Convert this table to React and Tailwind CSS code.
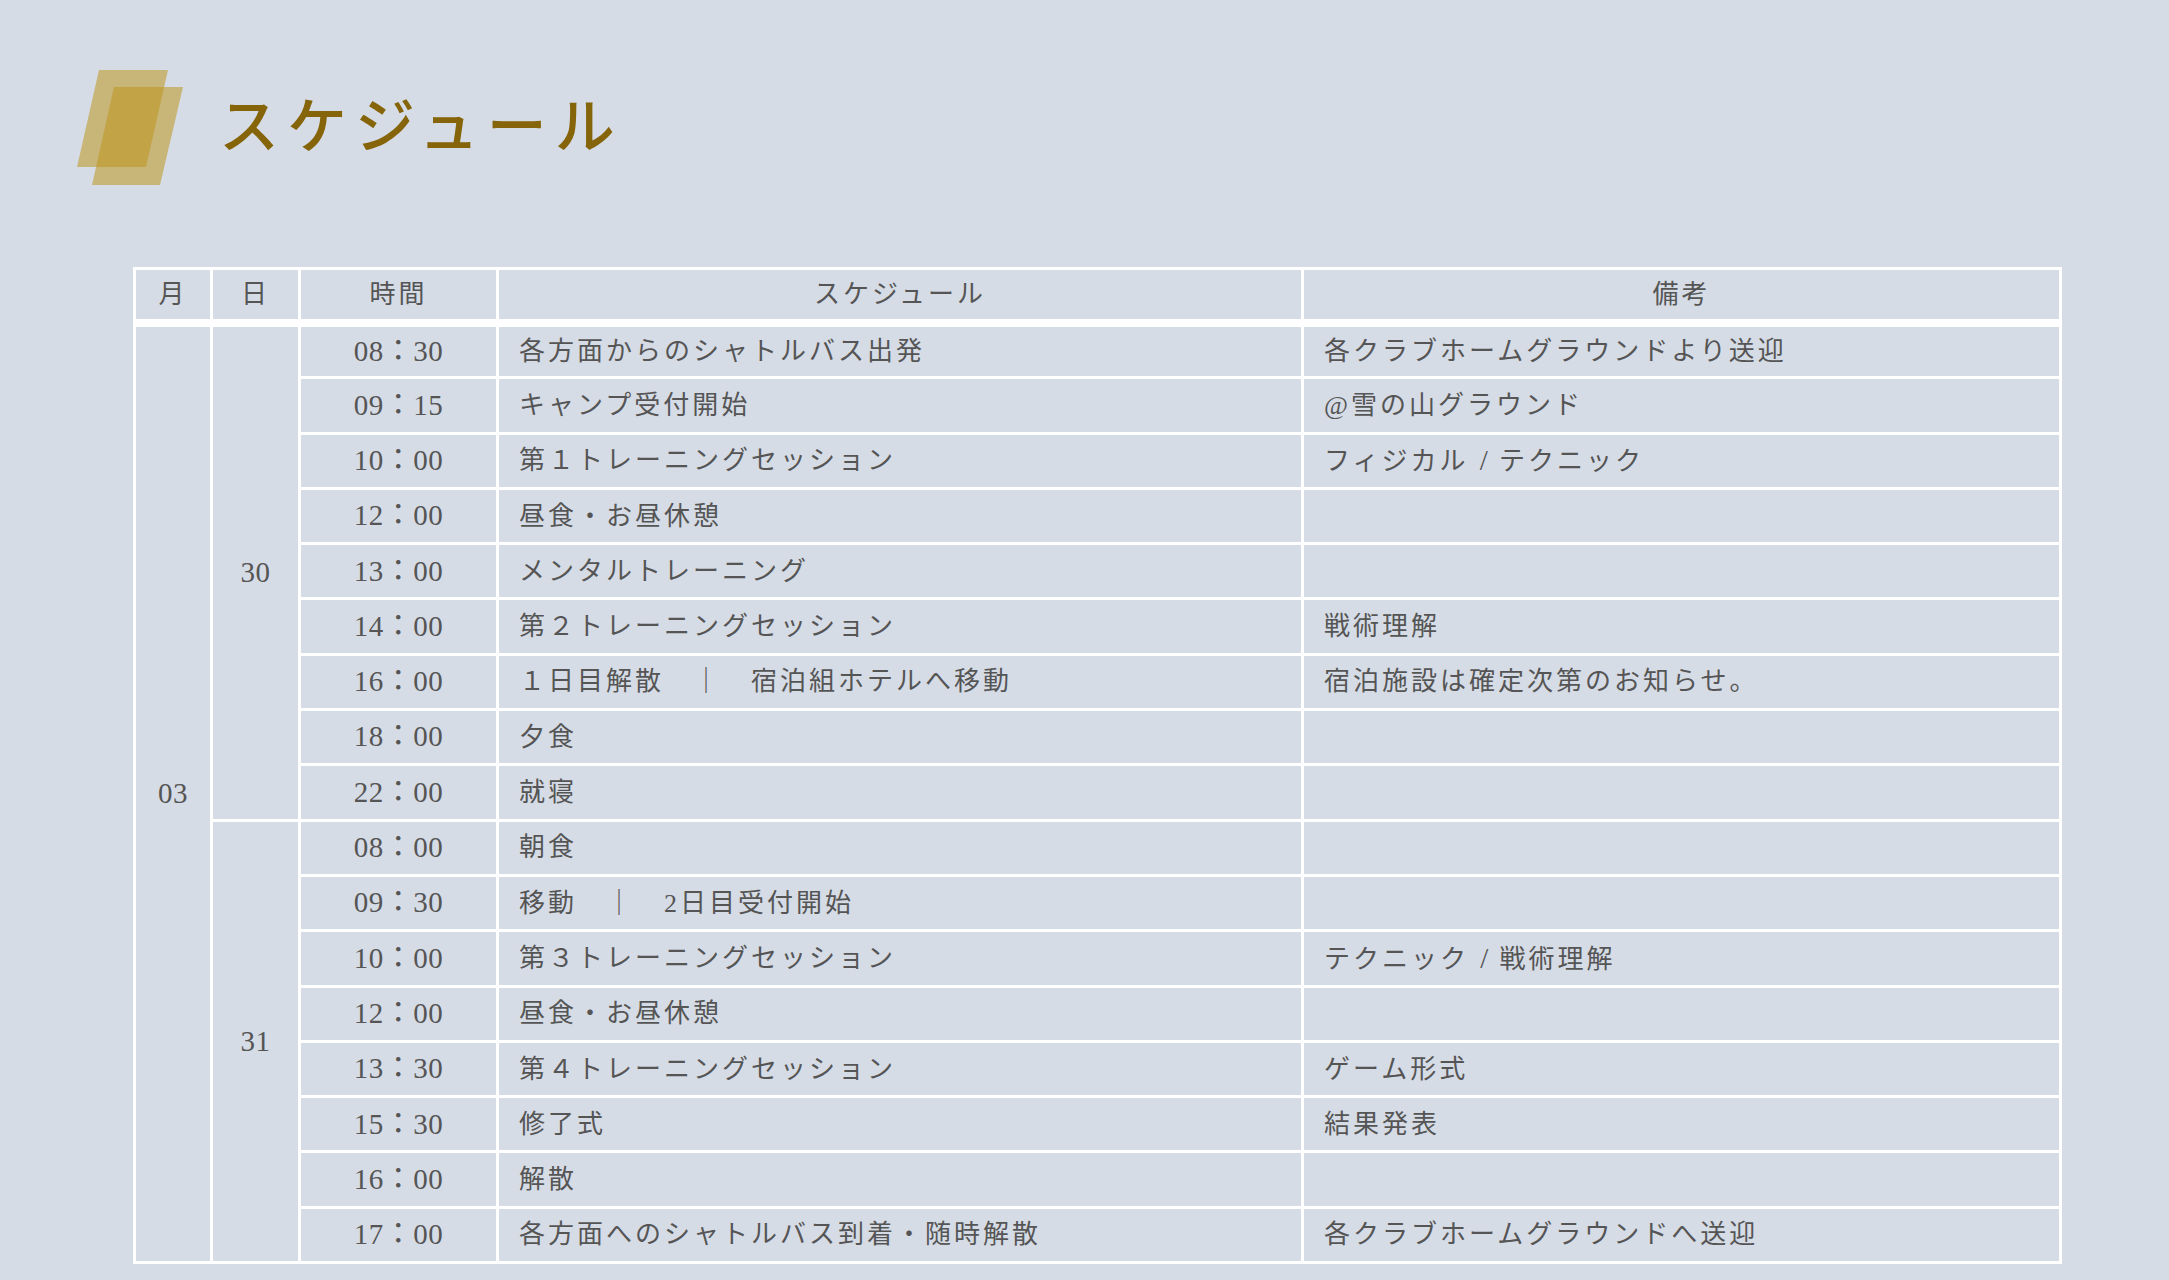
import React from "react";

// rows for each day; time / plan / note
const day30 = [
  ["08：30", "各方面からのシャトルバス出発", "各クラブホームグラウンドより送迎"],
  ["09：15", "キャンプ受付開始", "@雪の山グラウンド"],
  ["10：00", "第１トレーニングセッション", "フィジカル / テクニック"],
  ["12：00", "昼食・お昼休憩", ""],
  ["13：00", "メンタルトレーニング", ""],
  ["14：00", "第２トレーニングセッション", "戦術理解"],
  ["16：00", "１日目解散　｜　宿泊組ホテルへ移動", "宿泊施設は確定次第のお知らせ。"],
  ["18：00", "夕食", ""],
  ["22：00", "就寝", ""],
];

const day31 = [
  ["08：00", "朝食", ""],
  ["09：30", "移動　｜　2日目受付開始", ""],
  ["10：00", "第３トレーニングセッション", "テクニック / 戦術理解"],
  ["12：00", "昼食・お昼休憩", ""],
  ["13：30", "第４トレーニングセッション", "ゲーム形式"],
  ["15：30", "修了式", "結果発表"],
  ["16：00", "解散", ""],
  ["17：00", "各方面へのシャトルバス到着・随時解散", "各クラブホームグラウンドへ送迎"],
];

const cell = "border-[3px] border-white p-0";
const num = "text-[29px] tracking-[0.5px]";

const Logo = () => (
  <svg width="106" height="115" viewBox="0 0 106 115" className="shrink-0">
    <polygon points="22,0 91,0 69,97 0,97" fill="#be961e" fillOpacity="0.55" />
    <polygon points="37,17 106,17 83,115 15,115" fill="#be961e" fillOpacity="0.55" />
  </svg>
);

// notes use a plain serif slash between words
const Note = ({ text }) => {
  if (!text.includes(" / ")) return text;
  const [a, b] = text.split(" / ");
  return (
    <>
      {a}
      <span className="mx-[4px] text-[29px] tracking-normal"> / </span>
      {b}
    </>
  );
};

const Row = ({ r }) => (
  <>
    <td className={`${cell} ${num} text-center`}>{r[0]}</td>
    <td className={`${cell} pl-[20px] whitespace-nowrap`}>{r[1]}</td>
    <td className={`${cell} pl-[20px] whitespace-nowrap`}>
      <Note text={r[2]} />
    </td>
  </>
);

const App = () => {
  const total = day30.length + day31.length;

  return (
    <div
      className="min-h-screen w-full bg-[#d5dce6] text-[#555555]"
      style={{ fontFamily: '"Liberation Serif", "Noto Sans CJK JP", serif' }}
    >
      {/* HEADER */}
      <div className="flex items-center gap-[36px] pl-[77px] pt-[70px]">
        <Logo />
        <h1 className="text-[60px] leading-none tracking-[8px] font-medium text-[#86650a]">
          スケジュール
        </h1>
      </div>

      {/* TABLE */}
      <table className="ml-[133px] mt-[82px] w-[1926px] table-fixed border-collapse border-[3px] border-white text-[26px] tracking-[3px]">
        <colgroup>
          <col className="w-[77px]" />
          <col className="w-[88px]" />
          <col className="w-[198px]" />
          <col className="w-[805px]" />
          <col className="w-[758px]" />
        </colgroup>
        <thead>
          <tr className="h-[54px]">
            <th className={`${cell} border-b-8 font-normal`}>月</th>
            <th className={`${cell} border-b-8 font-normal`}>日</th>
            <th className={`${cell} border-b-8 font-normal`}>時間</th>
            <th className={`${cell} border-b-8 font-normal`}>スケジュール</th>
            <th className={`${cell} border-b-8 font-normal`}>備考</th>
          </tr>
        </thead>
        <tbody>
          {day30.map((r, i) => (
            <tr key={"a" + i} className="h-[55.3px]">
              {i === 0 && (
                <td rowSpan={total} className={`${cell} ${num} text-center align-middle`}>
                  03
                </td>
              )}
              {i === 0 && (
                <td rowSpan={day30.length} className={`${cell} ${num} text-center align-middle`}>
                  30
                </td>
              )}
              <Row r={r} />
            </tr>
          ))}
          {day31.map((r, i) => (
            <tr key={"b" + i} className="h-[55.3px]">
              {i === 0 && (
                <td rowSpan={day31.length} className={`${cell} ${num} text-center align-middle`}>
                  31
                </td>
              )}
              <Row r={r} />
            </tr>
          ))}
        </tbody>
      </table>
    </div>
  );
};

export default App;
